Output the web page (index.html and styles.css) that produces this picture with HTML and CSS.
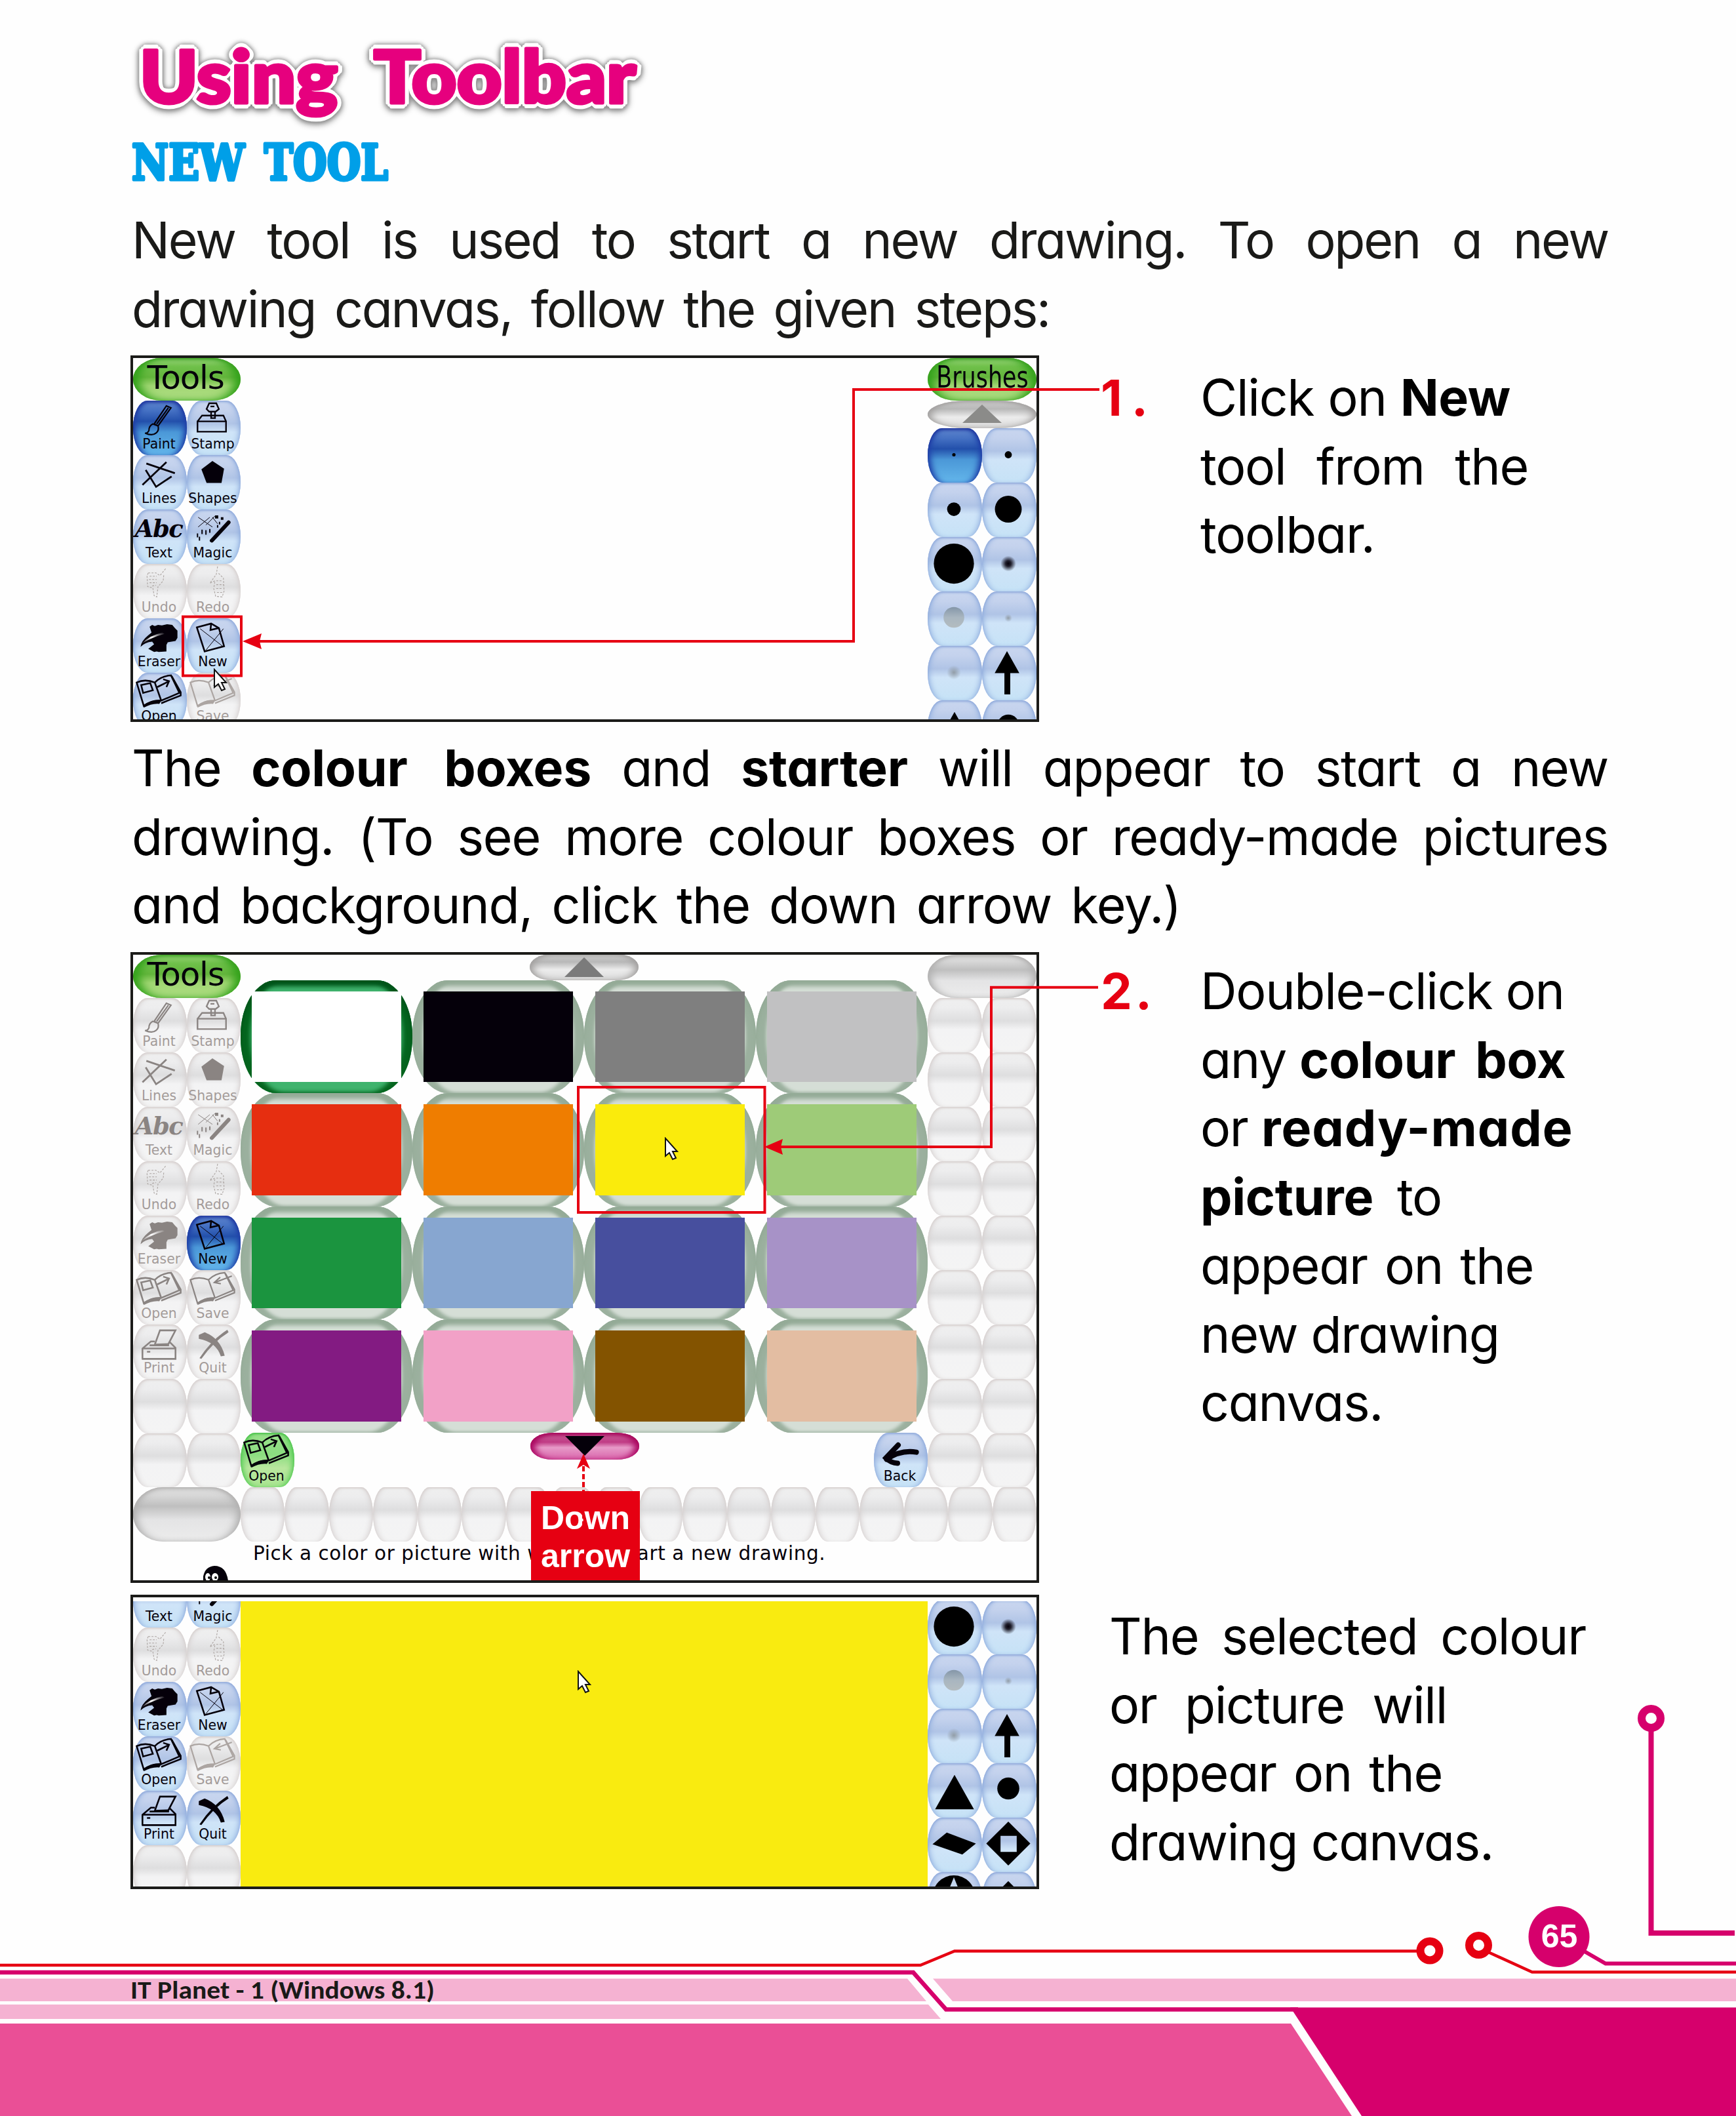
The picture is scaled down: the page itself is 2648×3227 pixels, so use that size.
FILE: index.html
```html
<!DOCTYPE html>
<html lang="en">
<head>
<meta charset="utf-8">
<title>Using Toolbar</title>
<link rel="stylesheet" href="styles.css">
</head>
<body>
<svg class="defs" aria-hidden="true">
<defs>
<radialGradient id="soft"><stop offset="0" stop-color="#05000a"/><stop offset=".35" stop-color="#05000a" stop-opacity=".85"/><stop offset="1" stop-color="#05000a" stop-opacity="0"/></radialGradient>
<radialGradient id="softgray"><stop offset="0" stop-color="#8d979f" stop-opacity=".9"/><stop offset="1" stop-color="#8d979f" stop-opacity="0"/></radialGradient>
<linearGradient id="ball" x1="0" y1="0" x2="0" y2="1"><stop offset="0" stop-color="#8496a8"/><stop offset=".5" stop-color="#a9b6c0"/><stop offset="1" stop-color="#b4bcc0"/></linearGradient>
<linearGradient id="sweep" x1="0" y1="1" x2="1" y2="0"><stop offset="0" stop-color="#fff" stop-opacity=".1"/><stop offset=".5" stop-color="#fff"/><stop offset="1" stop-color="#fff" stop-opacity="0"/></linearGradient>
</defs>
<symbol id="paint" viewBox="0 0 82 83"><g fill="none" stroke="currentColor" stroke-width="2.2"><path d="M52 8l7 3-20 28-6-3zM55 11L37 36M31 36q-6 3-6 10-2 5-6 4 11 5 17 0 5-4 3-11z"/></g></symbol>
<symbol id="stamp" viewBox="0 0 82 83"><g fill="none" stroke="currentColor" stroke-width="2.4"><path d="M17 32h44v16H17zM17 32l7-9h33l4 9M38 17h6v10h-6zM31 13l4-9h11l4 9-5 4H35zM37 9h6"/></g></symbol>
<symbol id="lines" viewBox="0 0 82 83"><path fill="none" stroke="currentColor" stroke-width="2.8" d="M21 13l44 15M52 11L15 46M20 23l16 26 24-16"/></symbol>
<symbol id="shapes" viewBox="0 0 82 83"><path fill="currentColor" d="M40 9l18 12-4 22H31l-8-21z"/></symbol>
<symbol id="magic" viewBox="0 0 82 83"><path fill="none" stroke="currentColor" stroke-width="6" stroke-linecap="round" d="M65 20L39 48"/><path stroke="currentColor" stroke-width="1" fill="none" d="M18 12l22 15M18 27l18-15M30 24l14-14M48 22l-8-10"/><path stroke="currentColor" stroke-width="2" fill="none" d="M24 31v7M30 32v7M36 30v6M17 37v6M20 42v6M48 24v4M51 19v4"/><path fill="currentColor" d="M44 9h5v5h-5zM53 12h4v4h-4z"/></symbol>
<symbol id="undo" viewBox="0 0 82 83"><path fill="none" stroke="currentColor" stroke-width="1.1" stroke-dasharray="3 2" d="M24 14h12l6 4 9-11M24 14l-2 4 1 17 8 2 2 12 4 2 2-16 8-9 1-10M26 19h11M25 24h12M26 29h11M30 34l6-1"/></symbol>
<symbol id="redo" viewBox="0 0 82 83"><path fill="none" stroke="currentColor" stroke-width="1.1" stroke-dasharray="3 2" d="M48 4l-2 12-10 14 8-4-2 12 3 12 10 1 3-9-1-20-8-8M46 26h10M46 32h11M46 38h10M47 44h8"/></symbol>
<symbol id="eraser" viewBox="0 0 82 83"><path fill="currentColor" d="M26 13l4-3 4 2 5-2 6 1 8-2 8 1 4 5 4 4v11l-3 5-12 2-2 4v10l-12 1-3-1-4 1-9-5 9-7-3-4q-11 1-18 8 1-9 12-18l5-4z"/><path fill="url(#sweep)" d="M14 39q12-13 32-17l3 2q-19 5-35 15z"/></symbol>
<symbol id="new" viewBox="0 0 82 83"><g fill="none" stroke="currentColor"><path stroke-width="2.6" d="M16 14l22-6 12 7 8 28-30 8zM38 8l-1 10 13-3"/><path stroke-width="1" d="M21 16l36 28M57 16L30 49"/></g></symbol>
<symbol id="open" viewBox="0 0 82 83"><g fill="none" stroke="currentColor" stroke-width="2.6"><path d="M6 15q13-6 28 0Q44 5 59 4l13 27-28 12q-14-1-27 8zM34 15l10 28M13 19l14-3 4 11-15 4zM38 22l16-8M47 10l9 3-4 9"/><path d="M60 5l14 25v5L44 47"/></g><path fill="currentColor" d="M17 51q12-11 27-8l-3 5q-12-1-24 6z"/></symbol>
<symbol id="save" viewBox="0 0 82 83"><g fill="none" stroke="currentColor" stroke-width="2.2"><path d="M6 15q13-6 28 0Q44 5 59 4l13 27-28 12q-14-1-27 8zM34 15l10 28M70 9L44 19M52 11l-9 8 10 2"/><path d="M60 5l14 25v5L44 47"/></g><path fill="currentColor" d="M17 51q12-11 27-8l-3 5q-12-1-24 6z"/></symbol>
<symbol id="print" viewBox="0 0 82 83"><path fill="none" stroke="currentColor" stroke-width="2.6" d="M15 53V37l13-11h6M56 26l10 10v17H14M15 37h51M34 31l8-22h24L55 30zM22 42h5M26 32h30"/></symbol>
<symbol id="quit" viewBox="0 0 82 83"><path fill="currentColor" d="M19 16l9-4q24 9 31 36l-6 1q-7-22-34-27zM63 8l2 4Q42 26 23 53l-3-1Q38 24 63 8z"/></symbol>
<symbol id="back" viewBox="0 0 82 83"><path fill="none" stroke="currentColor" stroke-width="8" stroke-linecap="round" d="M66 30Q42 26 20 41M38 19L19 39q8 8 18 8"/></symbol>
<symbol id="b1" viewBox="0 0 82 83"><circle cx="41" cy="41" r="2.6"/></symbol>
<symbol id="b2" viewBox="0 0 82 83"><circle cx="41" cy="41" r="5.5"/></symbol>
<symbol id="b3" viewBox="0 0 82 83"><circle cx="41" cy="41" r="10.5"/></symbol>
<symbol id="b4" viewBox="0 0 82 83"><circle cx="41" cy="41" r="20.7"/></symbol>
<symbol id="b5" viewBox="0 0 82 83"><circle cx="41" cy="41" r="31"/></symbol>
<symbol id="b6" viewBox="0 0 82 83"><circle cx="41" cy="41" r="12" fill="url(#soft)"/></symbol>
<symbol id="b7" viewBox="0 0 82 83"><circle cx="41" cy="40" r="16" fill="url(#ball)"/></symbol>
<symbol id="b8" viewBox="0 0 82 83"><circle cx="41" cy="41" r="6" fill="url(#softgray)"/></symbol>
<symbol id="b9" viewBox="0 0 82 83"><circle cx="41" cy="41" r="11" fill="url(#softgray)"/></symbol>
<symbol id="b10" viewBox="0 0 82 83"><path d="M39 8l19 34H44v33h-9V42H20z"/></symbol>
<symbol id="b11" viewBox="0 0 82 83"><path d="M42 18l30 53H12z"/></symbol>
<symbol id="b12" viewBox="0 0 82 83"><circle cx="41" cy="39" r="17"/></symbol>
<symbol id="b13" viewBox="0 0 82 83"><path d="M30 23l45 17-21 17L8 41z"/></symbol>
<symbol id="b14" viewBox="0 0 82 83"><path fill-rule="evenodd" d="M41 6l34 34-34 34L7 40zM29 28v25h25V28z"/></symbol>
<symbol id="b15" viewBox="0 0 82 83"><circle cx="41" cy="38" r="33"/><path fill="#c4d6ee" d="M41 8l13 32H28z"/></symbol>
<symbol id="b16" viewBox="0 0 82 83"><path d="M41 14l22 22-22 22-22-22z"/></symbol>
<symbol id="cursor" viewBox="0 0 22 36"><path fill="#fff" stroke="#111" stroke-width="2" d="M2 2v27l6-5 5 10 5-2-5-10h7z"/></symbol>
</svg>

<main class="page">
  <h1 class="title"><svg width="820" height="200" viewBox="199 0 820 200"><g class="title-text"><text x="213" y="157" textLength="302" lengthAdjust="spacingAndGlyphs">Using</text><text x="570" y="157" textLength="400" lengthAdjust="spacingAndGlyphs">Toolbar</text></g></svg></h1>
  <h2 class="subtitle"><svg width="500" height="114" viewBox="199 200 500 114"><g class="subtitle-text"><text x="201" y="274" textLength="172" lengthAdjust="spacingAndGlyphs">NEW</text><text x="403" y="274" textLength="189" lengthAdjust="spacingAndGlyphs">TOOL</text></g></svg></h2>
  <p class="copy intro"><span class="ln full">New tool is used to start a new drawing. To open a new</span><span class="ln w1400">drawing canvas, follow the given steps:</span></p>

  <section class="row">
    <div class="panel">
      <div class="cols first">
        <div>
          <div class="pill green"><span class="tools-t">Tools</span></div>
          <div class="keys">
            <div class="key sel"><svg><use href="#paint"/></svg><b>Paint</b></div><div class="key"><svg><use href="#stamp"/></svg><b>Stamp</b></div>
            <div class="key"><svg><use href="#lines"/></svg><b>Lines</b></div><div class="key"><svg><use href="#shapes"/></svg><b>Shapes</b></div>
            <div class="key"><em>Abc</em><b>Text</b></div><div class="key"><svg><use href="#magic"/></svg><b>Magic</b></div>
            <div class="key off faint"><svg><use href="#undo"/></svg><b>Undo</b></div><div class="key off faint"><svg><use href="#redo"/></svg><b>Redo</b></div>
            <div class="key"><svg><use href="#eraser"/></svg><b>Eraser</b></div><div class="key"><svg><use href="#new"/></svg><b>New</b></div>
            <div class="key"><svg><use href="#open"/></svg><b>Open</b></div><div class="key off faint"><svg><use href="#save"/></svg><b>Save</b></div>
          </div>
        </div>
        <div></div>
        <div>
          <div class="pill green"><span class="brushes-t">Brushes</span></div>
          <div class="scroll flat"><svg width="60" height="30" viewBox="0 0 60 30"><path d="M30 0l30 28H0z" fill="#8b8b89"/></svg></div>
          <div class="keys">
            <div class="key sel"><svg><use href="#b1"/></svg></div><div class="key"><svg><use href="#b2"/></svg></div>
            <div class="key"><svg><use href="#b3"/></svg></div><div class="key"><svg><use href="#b4"/></svg></div>
            <div class="key"><svg><use href="#b5"/></svg></div><div class="key"><svg><use href="#b6"/></svg></div>
            <div class="key"><svg><use href="#b7"/></svg></div><div class="key"><svg><use href="#b8"/></svg></div>
            <div class="key"><svg><use href="#b9"/></svg></div><div class="key"><svg><use href="#b10"/></svg></div>
            <div class="key"><svg><use href="#b11"/></svg></div><div class="key"><svg><use href="#b12"/></svg></div>
          </div>
        </div>
      </div>
    </div>
    <svg class="callout" width="1500" height="559" viewBox="199 542 1500 559"><g class="red-line"><path d="M279 940.5h89v90h-89zM1677 594H1302V978H395"/></g><path fill="#e60012" d="M370 978l29-12-3 12 3 12z"/><use href="#cursor" x="325" y="1019" width="22" height="36"/></svg>
    <div class="step s1"><span class="num one">1.</span><p class="copy black"><span class="ln" style="width:473px">Click on <b>New</b></span><span class="ln" style="width:500px">tool from the</span><span class="ln" style="width:278px">toolbar.</span></p></div>
  </section>

  <p class="copy black second"><span class="ln full">The <b>colour boxes</b> and <b>starter</b> will appear to start a new</span><span class="ln full">drawing. (To see more colour boxes or ready-made pictures</span><span class="ln w1600">and background, click the down arrow key.)</span></p>

  <section class="row">
    <div class="panel tall">
      <div class="cols">
        <div>
          <div class="pill green"><span class="tools-t">Tools</span></div>
          <div class="keys">
            <div class="key off"><svg><use href="#paint"/></svg><b>Paint</b></div><div class="key off"><svg><use href="#stamp"/></svg><b>Stamp</b></div>
            <div class="key off"><svg><use href="#lines"/></svg><b>Lines</b></div><div class="key off"><svg><use href="#shapes"/></svg><b>Shapes</b></div>
            <div class="key off"><em>Abc</em><b>Text</b></div><div class="key off"><svg><use href="#magic"/></svg><b>Magic</b></div>
            <div class="key off faint"><svg><use href="#undo"/></svg><b>Undo</b></div><div class="key off faint"><svg><use href="#redo"/></svg><b>Redo</b></div>
            <div class="key off"><svg><use href="#eraser"/></svg><b>Eraser</b></div><div class="key sel"><svg><use href="#new"/></svg><b>New</b></div>
            <div class="key off"><svg><use href="#open"/></svg><b>Open</b></div><div class="key off"><svg><use href="#save"/></svg><b>Save</b></div>
            <div class="key off"><svg><use href="#print"/></svg><b>Print</b></div><div class="key off"><svg><use href="#quit"/></svg><b>Quit</b></div>
            <div class="key off"></div><div class="key off"></div><div class="key off"></div><div class="key off"></div>
          </div>
        </div>
        <div class="chooser">
          <div class="scroll"><svg width="60" height="32" viewBox="0 0 60 32"><path d="M30 1l30 30H0z" fill="#7b7b7b"/></svg></div>
          <div class="swatches">
            <div class="sw on"><i style="background:#fff"></i></div><div class="sw"><i style="background:#05000a"></i></div><div class="sw"><i style="background:#7f7f7f"></i></div><div class="sw"><i style="background:#c1c1c2"></i></div>
            <div class="sw"><i style="background:#e62e10"></i></div><div class="sw"><i style="background:#ef7d00"></i></div><div class="sw"><i style="background:#faeb0c"></i></div><div class="sw"><i style="background:#9ecb78"></i></div>
            <div class="sw"><i style="background:#1b943f"></i></div><div class="sw"><i style="background:#87a6d0"></i></div><div class="sw"><i style="background:#474f9e"></i></div><div class="sw"><i style="background:#a792c7"></i></div>
            <div class="sw"><i style="background:#831b82"></i></div><div class="sw"><i style="background:#f2a1c7"></i></div><div class="sw"><i style="background:#835300"></i></div><div class="sw"><i style="background:#e3bda2"></i></div>
          </div>
          <div class="chooser-bar">
            <div class="key lime"><svg><use href="#open"/></svg><b>Open</b></div>
            <div class="scroll pink"><svg width="60" height="30" viewBox="0 0 60 30"><path d="M0 0h60L30 30z" fill="#05000a"/></svg></div>
            <div class="key"><svg><use href="#back"/></svg><b>Back</b></div>
          </div>
        </div>
        <div>
          <div class="pill gray"></div>
          <div class="keys">
            <div class="key off"></div><div class="key off"></div><div class="key off"></div><div class="key off"></div><div class="key off"></div><div class="key off"></div>
            <div class="key off"></div><div class="key off"></div><div class="key off"></div><div class="key off"></div><div class="key off"></div><div class="key off"></div>
            <div class="key off"></div><div class="key off"></div><div class="key off"></div><div class="key off"></div><div class="key off"></div><div class="key off"></div>
          </div>
        </div>
      </div>
      <div class="palette">
        <div class="pill gray"></div>
        <div class="key off"></div><div class="key off"></div><div class="key off"></div><div class="key off"></div><div class="key off"></div><div class="key off"></div>
        <div class="key off"></div><div class="key off"></div><div class="key off"></div><div class="key off"></div><div class="key off"></div><div class="key off"></div>
        <div class="key off"></div><div class="key off"></div><div class="key off"></div><div class="key off"></div><div class="key off"></div><div class="key off"></div>
      </div>
      <div class="hint"><svg width="42" height="24" viewBox="0 0 42 24"><path fill="#05000a" d="M3 24V17Q6 2 20 1q18 0 21 23z"/><ellipse cx="10" cy="18" rx="4" ry="6" fill="#fff"/><ellipse cx="21" cy="18" rx="5" ry="6" fill="#fff"/><circle cx="12" cy="19" r="2"/><circle cx="22" cy="19" r="2"/></svg><span>Pick a color or picture with which to start a new drawing.</span></div>
    </div>
    <div class="tag">Down<br>arrow</div>
    <svg class="callout" width="1500" height="962" viewBox="199 1452 1500 962"><g class="red-line"><path d="M882 1658h284.500v191H882zM1675 1505.700H1512V1749H1190"/><path d="M890 2236v90" stroke-dasharray="8 4"/></g><path fill="#e60012" d="M1166 1749l28-12-3 12 3 12zM890 2217l10 23-10-6-10 6z"/><use href="#cursor" x="1013" y="1734" width="22" height="36"/></svg>
    <div class="step s2"><span class="num">2.</span><p class="copy black"><span class="ln" style="width:554px">Double-click on</span><span class="ln" style="width:554px">any <b>colour box</b></span><span class="ln" style="width:560px">or <b class="wide">ready-made</b></span><span class="ln" style="width:368px"><b>picture</b> to</span><span class="ln" style="width:508px">appear on the</span><span class="ln" style="width:443px">new drawing</span><span class="ln" style="width:251px">canvas.</span></p></div>
  </section>

  <section class="row">
    <div class="panel">
      <div class="cols third">
        <div class="keys lefts">
          <div class="key"><em>Abc</em><b>Text</b></div><div class="key"><svg><use href="#magic"/></svg><b>Magic</b></div>
          <div class="key off faint"><svg><use href="#undo"/></svg><b>Undo</b></div><div class="key off faint"><svg><use href="#redo"/></svg><b>Redo</b></div>
          <div class="key"><svg><use href="#eraser"/></svg><b>Eraser</b></div><div class="key"><svg><use href="#new"/></svg><b>New</b></div>
          <div class="key"><svg><use href="#open"/></svg><b>Open</b></div><div class="key off faint"><svg><use href="#save"/></svg><b>Save</b></div>
          <div class="key"><svg><use href="#print"/></svg><b>Print</b></div><div class="key"><svg><use href="#quit"/></svg><b>Quit</b></div>
          <div class="key off"></div><div class="key off"></div>
        </div>
        <div class="canvas"></div>
        <div class="keys rights">
          <div class="key"><svg><use href="#b5"/></svg></div><div class="key"><svg><use href="#b6"/></svg></div>
          <div class="key"><svg><use href="#b7"/></svg></div><div class="key"><svg><use href="#b8"/></svg></div>
          <div class="key"><svg><use href="#b9"/></svg></div><div class="key"><svg><use href="#b10"/></svg></div>
          <div class="key"><svg><use href="#b11"/></svg></div><div class="key"><svg><use href="#b12"/></svg></div>
          <div class="key"><svg><use href="#b13"/></svg></div><div class="key"><svg><use href="#b14"/></svg></div>
          <div class="key"><svg><use href="#b15"/></svg></div><div class="key"><svg><use href="#b16"/></svg></div>
        </div>
      </div>
    </div>
    <svg class="callout" width="1386" height="449" viewBox="199 2432 1386 449"><use href="#cursor" x="880" y="2547" width="22" height="36"/></svg>
    <div class="step s3"><p class="copy black"><span class="ln" style="width:727px">The selected colour</span><span class="ln" style="width:515px">or picture will</span><span class="ln" style="width:508px">appear on the</span><span class="ln" style="width:562px">drawing canvas.</span></p></div>
  </section>

  <footer class="footer">
    <svg width="2648" height="647" viewBox="0 2580 2648 647">
      <path fill="#f5b2d2" d="M0 3017.500H1384L1413 3052H0zM1423 3017.500H2648V3052H1453zM0 3057H1416L1435 3079H0z"/>
      <path fill="#ea4f96" d="M0 3086H1969L2062 3227H0z"/>
      <path fill="#d6006c" d="M1968 3061.500H2648V3227H2077L1972 3067z"/>
      <g fill="none" stroke="#d6006c">
        <path stroke-width="6.500" d="M0 3008H1393L1443 3064.500H1980"/>
        <path stroke-width="8" d="M2518.500 2638V2948H2646"/>
        <path stroke-width="6" d="M2410 2972L2449 2994.500H2648"/>
        <circle cx="2518.500" cy="2620.500" r="14.500" stroke-width="12"/>
      </g>
      <g fill="none" stroke="#e60012">
        <path stroke-width="4.500" d="M0 2997H1404L1456 2975.500H2162M2270 2977L2337 3007.500H2648"/>
        <circle cx="2181" cy="2975" r="14.500" stroke-width="12"/><circle cx="2255.500" cy="2966.500" r="14.500" stroke-width="12"/>
      </g>
      <circle cx="2378" cy="2953.500" r="46.500" fill="#d6006c"/>
      <text class="pageno" x="2378.500" y="2970" text-anchor="middle">65</text>
      <text class="book" x="199" y="3047.500" textLength="464" lengthAdjust="spacingAndGlyphs">IT Planet - 1 (Windows 8.1)</text>
    </svg>
  </footer>
</main>
</body>
</html>
```

FILE: styles.css
```css
* { box-sizing: border-box; }
body { margin: 0; background: #fefefe; }
.defs { position: absolute; width: 0; height: 0; }
svg { display: block; }
h1, h2, p { margin: 0; }

.page {
  position: relative;
  display: grid;
  grid-template-rows: 200px 114px 228px 559px 351px 980px 449px;
  width: 2648px;
  height: 3227px;
  padding-left: 199px;
  overflow: hidden;
}

.title-text {
  font: 900 110px Lato, sans-serif;
  fill: #e6007e;
  stroke: #e6007e;
  stroke-width: 5px;
  stroke-linejoin: round;
  filter:
    drop-shadow(3px 3px 0 #fff) drop-shadow(-3px -3px 0 #fff)
    drop-shadow(3px -3px 0 #fff) drop-shadow(-3px 3px 0 #fff)
    drop-shadow(0 0 3px #888) drop-shadow(0 3px 4px #888);
}
.subtitle-text {
  font: bold 75px "DejaVu Serif", serif;
  fill: #009fe8;
  stroke: #009fe8;
  stroke-width: 5px;
  stroke-linejoin: round;
}

/* body copy */
.copy {
  font: 400 77px/104.7px Inter, sans-serif;
  font-feature-settings: "cv11" 1;
  letter-spacing: -2.3px;
  color: #1a1a18;
}
.copy.black { color: #000; letter-spacing: -1.3px; }
.copy.second { padding-top: 18px; }
.copy b { font-weight: 700; letter-spacing: -.3px; word-spacing: 12px; }
.copy b.wide { letter-spacing: 1px; }
.ln { display: block; white-space: nowrap; text-align: justify; text-align-last: justify; }
.full { width: 2252px; margin-left: 2px; }
.w1400 { width: 1400px; margin-left: 2px; }
.w1600 { width: 1600px; margin-left: 2px; }

.row { position: relative; display: flex; align-items: flex-start; }
.step { display: flex; margin-left: 99px; }
.s1 { padding-top: 12px; }
.s2 { padding-top: 7px; }
.s3 { padding-top: 11px; margin-left: 107px; }
.num {
  flex: none;
  width: 152px;
  margin-left: -5px;
  font: 700 76px/104.700px Inter, sans-serif;
  letter-spacing: 5px;
  color: #e60012;
}
.num.one { letter-spacing: 14px; }

/* paint program panels */
.panel {
  width: 1386px;
  height: 559px;
  flex: none;
  border: 4px solid #1b1b19;
  background: #fefefe;
  overflow: hidden;
}
.panel.tall { height: 962px; }
.row:last-of-type .panel { height: 449px; }
.cols { display: grid; grid-template-columns: 164px 1048px 166px; }
.callout { position: absolute; left: 0; top: 0; overflow: visible; }
.red-line { fill: none; stroke: #e60012; stroke-width: 4px; }

.pill {
  display: flex;
  align-items: flex-start;
  justify-content: center;
  height: 66px;
  border-radius: 44px / 33px;
  font-family: "DejaVu Sans", sans-serif;
  color: #05000a;
}
.first .pill { height: 65px; }
.pill.green {
  background: linear-gradient(#a5d987 0, #6fc04a 20%, #63b53c 45%, #a0d672 65%, #b2df86);
  box-shadow: inset 0 2px 4px #3da023, inset 14px 0 14px -4px #34a31c, inset -14px 0 14px -4px #34a31c;
}
.pill.gray {
  background: linear-gradient(#dcdcdc 0, #d8d8d8 15%, #bfbfbf 35%, #e4e4e5 60%, #ececec);
  box-shadow: inset 0 2px 4px #b5b3b2, inset 10px 0 12px -4px #b2b2b2, inset -10px 0 12px -4px #b2b2b2;
}
.tools-t { font-size: 50px; line-height: 60px; letter-spacing: -1.2px; margin-left: -4px; }
.brushes-t { font-size: 46px; line-height: 58px; transform: scaleX(.76); }

.keys { display: grid; grid-template-columns: 1fr 1fr; grid-auto-rows: 82.95px; }
.key {
  display: grid;
  grid-template: 100% / 100%;
  border-radius: 22px / 41px;
  color: #05000a;
  background: linear-gradient(#c9d6ef 0, #c4d2ed 18%, #b0c4e6 42%, #cfe4f8 58%, #c6e2f6);
  box-shadow: inset 0 2px 3px #93acdc, inset 7px 0 8px -5px #8fadde, inset -7px 0 8px -5px #8fadde;
}
.key svg, .key b, .key em { grid-area: 1 / 1; }
.key svg { width: 82px; height: 82px; margin-left: -1px; }
.key em {
  justify-self: center;
  font: italic bold 37px/48px "DejaVu Serif", serif;
  letter-spacing: -1.5px;
  padding-top: 5px;
  margin-left: -4px;
}
.key b {
  align-self: end;
  justify-self: center;
  font: 400 20.4px/24px "DejaVu Sans", sans-serif;
  padding-bottom: 5px;
  margin-left: -3px;
}
.key.off {
  color: #8a8482;
  background: linear-gradient(#efefef 0, #ededee 18%, #dededf 42%, #f3f3f4 58%, #f4f4f4);
  box-shadow: inset 0 2px 3px #d8d1d0, inset 7px 0 8px -5px #d5d0d0, inset -7px 0 8px -5px #d5d0d0;
}
.key.faint { color: #aca5a2; }
.key.off b { color: #a39b99; }
.key.sel {
  background: linear-gradient(#5f85cd 0, #4672c4 18%, #2350ab 38%, #4b98d8 58%, #63b6ea);
  box-shadow: inset 0 3px 4px #2238a0, inset 10px 0 8px -5px #2247ac, inset -10px 0 8px -5px #2247ac;
}
.key.lime {
  background: linear-gradient(#9be08c, #8bdd80 40%, #b9e79e 65%, #a8e491);
  box-shadow: inset 0 2px 3px #4cc24d, inset 7px 0 8px -4px #55cc55, inset -7px 0 8px -4px #55cc55;
}

.scroll {
  display: flex;
  justify-content: center;
  align-items: center;
  width: 166px;
  height: 40px;
  border-radius: 34px / 20px;
  background: linear-gradient(#cfcfcf, #b8b8b8 30%, #ececec 60%, #dcdcdc);
  box-shadow: inset 0 2px 4px #a5a3a2, inset 10px 0 12px -4px #a5a3a2, inset -10px 0 12px -4px #a5a3a2;
}
.scroll.flat { height: 42px; border-radius: 60px / 21px; }
.scroll.pink {
  height: 41px;
  margin-left: 360px;
  margin-right: 358px;
  background: linear-gradient(#c9659b, #c03c85 35%, #e79ac8 55%, #d863aa);
  box-shadow: inset 0 4px 5px #a90d5e, inset 12px 0 10px -4px #b0106a, inset -12px 0 10px -4px #b0106a;
}

.chooser { display: flex; flex-direction: column; align-items: center; }
.chooser .scroll { flex: none; }
.chooser > .scroll { margin-top: -1px; }
.swatches { display: grid; grid-template-columns: repeat(4, 262px); grid-auto-rows: 172.4px; }
.sw {
  display: flex;
  padding: 17px;
  border-radius: 54px / 84px;
  background: #d5ded6;
  box-shadow: inset 0 9px 6px #94ab97, inset 16px 0 5px #9bb09e, inset -16px 0 5px #9bb09e;
}
.sw.on { background: #3fb36d; box-shadow: inset 0 9px 6px #00541a, inset 15px 0 6px #05651f, inset -15px 0 6px #05651f; }
.sw i { flex: 1; }
.chooser-bar { display: flex; align-items: flex-start; width: 1048px; height: 83px; }
.chooser-bar .key { flex: none; width: 82px; height: 83px; }

.palette { display: grid; grid-template-columns: 164px repeat(18, 1fr); height: 83px; }
.palette .pill { height: 83px; border-radius: 46px / 42px; }
.palette .key { border-radius: 18px / 42px; }

.hint { display: flex; align-items: flex-start; gap: 37px; padding-left: 104px; height: 60px; }
.hint svg { margin-top: 36px; flex: none; }
.hint span { font: 29.5px/36px "DejaVu Sans", sans-serif; white-space: nowrap; color: #05000a; letter-spacing: .58px; }

.tag {
  position: absolute;
  left: 611px;
  top: 822px;
  width: 166px;
  height: 136px;
  padding-top: 12px;
  background: #e60012;
  color: #fff;
  font: bold 50px/58px "Liberation Sans", Arial, sans-serif;
  text-align: center;
}

.third { margin-top: 6px; height: 435px; overflow: hidden; }
.lefts { margin-top: -43px; }
.rights { margin-top: -2px; }
.canvas { background: #f9eb10; }

.footer { position: absolute; left: 0; bottom: 0; }
.pageno { font: bold 50px "Liberation Sans", Arial, sans-serif; fill: #fff; }
.book { font: bold 38px Carlito, "Open Sans", sans-serif; fill: #1a1a18; }
```
